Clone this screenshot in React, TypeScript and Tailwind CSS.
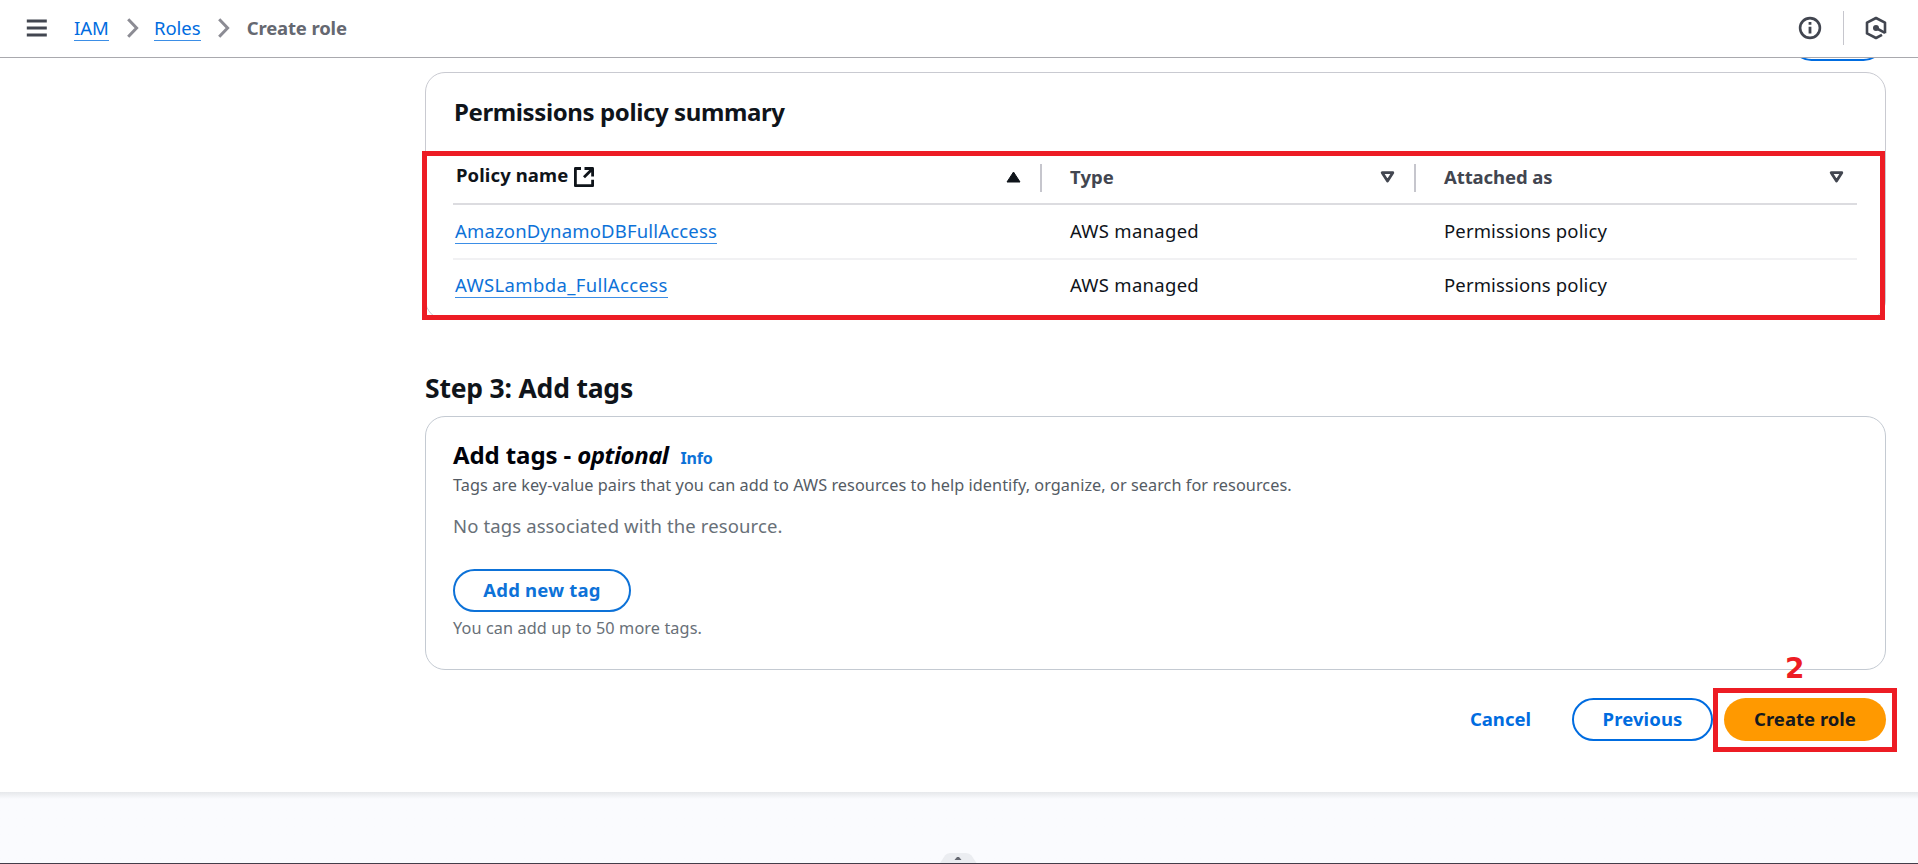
import type { ReactNode } from "react";

function MenuIcon() {
  return (
    <svg width="22" height="20" viewBox="0 0 22 20" fill="none" stroke="#424650" strokeWidth="3">
      <path d="M.8 3h20M.8 10h20M.8 17h20" />
    </svg>
  );
}

function ChevronIcon() {
  return (
    <svg width="12" height="20" viewBox="0 0 12 20" fill="none" stroke="#8c8c94" strokeWidth="3">
      <path d="M1.2 1.2 9.6 10 1.2 18.8" />
    </svg>
  );
}

function InfoIcon() {
  return (
    <svg width="24" height="24" viewBox="0 0 24 24" fill="none" stroke="#424650" strokeWidth="2.6">
      <circle cx="12" cy="12" r="9.9" />
      <path d="M12 10.8v6.8M12 6v2.8" strokeWidth="2.8" />
    </svg>
  );
}

function HexagonIcon() {
  return (
    <svg width="22" height="24" viewBox="0 0 22 24" fill="none" stroke="#424650" strokeWidth="2.6" strokeLinejoin="round">
      <path d="M20 17.2V6.6L11 2 2 6.6v10.8L11 22l6-3.2" />
      <path d="M11 12l9 4.8" />
      <circle cx="11" cy="12" r="3" fill="#424650" stroke="none" />
    </svg>
  );
}

function ExternalIcon() {
  return (
    <svg width="20" height="20" viewBox="0 0 20 20" fill="none" stroke="#0f141a" strokeWidth="2.8" strokeLinejoin="round">
      <path d="M7 1.5H1.4v17.200h17.200v-6M10.500 1.500h8.100v8M18.300 1.900 10 10.200" />
    </svg>
  );
}

function SortIcon({ active = false }: { active?: boolean }) {
  return active ? (
    <svg className="-mt-[2px]" width="15" height="12" viewBox="0 0 15 12" fill="#0f141a" stroke="#0f141a" strokeWidth="1" strokeLinejoin="round">
      <path d="M7.5 1 14 11H1Z" />
    </svg>
  ) : (
    <svg className="-mt-[2px]" width="15" height="12" viewBox="0 0 15 12" fill="none" stroke="#424650" strokeWidth="2.8" strokeLinejoin="round">
      <path d="M2.200 1.700h10.600L7.500 10Z" />
    </svg>
  );
}

function Link({ children, className = "" }: { children: ReactNode; className?: string }) {
  return (
    <a className={`border-b leading-6 text-[18.5px] border-[#3b8ee6] ${className}`}>{children}</a>
  );
}

const policies = [
  { name: "AmazonDynamoDBFullAccess", type: "AWS managed", attached: "Permissions policy", tracking: "tracking-[0.17px] text-[#0d72d8]" },
  { name: "AWSLambda_FullAccess", type: "AWS managed", attached: "Permissions policy", tracking: "tracking-[0.36px] text-[#0d72d8]" },
];

const columns = "grid grid-cols-[589px_374px_441px]";

export default function App() {
  return (
    <div className="relative flex h-[864px] w-[1918px] flex-col overflow-hidden bg-white font-['Noto_Sans','Open_Sans',sans-serif] text-[18.5px] leading-6 text-[#0f141a]">
      <header className="flex h-[58px] shrink-0 items-center border-b border-[#a9a9ae] pr-[31px] pb-px pl-[26px]">
        <MenuIcon />
        <nav className="ml-[26px] flex items-center">
          <Link className="text-[#006ce0]">IAM</Link>
          <span className="mr-[15px] ml-[18px]"><ChevronIcon /></span>
          <Link className="text-[#006ce0]">Roles</Link>
          <span className="mr-[17px] ml-[17px]"><ChevronIcon /></span>
          <span className="border-b border-transparent font-bold tracking-[-0.15px] text-[#656871]">Create role</span>
        </nav>
        <div className="ml-auto flex items-center">
          <InfoIcon />
          <span className="mr-[21px] ml-[21px] h-[34px] w-px bg-[#c6c6cd]" />
          <HexagonIcon />
        </div>
      </header>

      <main className="h-[734px] shrink-0 overflow-hidden pr-8 pl-[425px]">
        <div className="-mt-10 flex justify-end pr-px">
          <div className="h-[43px] w-[95px] rounded-full border-2 border-[#006ce0]" />
        </div>

        <section className="relative mt-[11px] h-[248px] rounded-[20px] border border-[#c9cad1] px-[27px]">
          <h2 className="h-[79px] pt-6 pl-px text-[24px] leading-[30px] font-bold tracking-[-0.39px]">
            Permissions policy summary
          </h2>
          <div className={`${columns} h-[53px] w-[1404px] items-center border-b-2 border-[#dcdce0] font-bold`}>
            <div className="flex h-7 items-center justify-between border-r-2 border-[#c6c6cd] pr-[19px] pl-[3px]">
              <span className="flex items-center gap-[6px] pb-[5px] tracking-[0.1px]">
                Policy name <span className="pt-[4px]"><ExternalIcon /></span>
              </span>
              <SortIcon active />
            </div>
            <div className="flex h-7 items-center justify-between border-r-2 border-[#c6c6cd] pr-[19px] pl-7 text-[#424650]">
              <span className="pb-[2px] tracking-[0.1px]">Type</span>
              <SortIcon />
            </div>
            <div className="flex items-center justify-between pr-[13px] pl-7 text-[#424650]">
              <span className="pb-[2px] tracking-[-0.08px]">Attached as</span>
              <SortIcon />
            </div>
          </div>
          {policies.map((p, i) => (
            <div key={p.name} className={`${columns} w-[1404px] items-center ${i === 0 ? "h-[55px] border-b-2 border-[#f1f1f3]" : "h-[51px]"}`}>
              <div className="flex pl-[2px]"><Link className={p.tracking}>{p.name}</Link></div>
              <span className="pb-px pl-7 tracking-[0.28px]">{p.type}</span>
              <span className="pb-px pl-7 tracking-[0.14px]">{p.attached}</span>
            </div>
          ))}
          <div className="pointer-events-none absolute -top-px -left-px mt-[79px] -ml-[3px] h-[169px] w-[1463px] border-[5px] border-[#ed1c24]" />
        </section>

        <h1 className="mt-[52px] text-[26.5px] leading-8 font-bold tracking-[-0.2px]">Step 3: Add tags</h1>

        <section className="mt-3 h-[254px] rounded-[20px] border border-[#c4cad2] px-[27px] pt-[23px]">
          <div className="flex items-baseline text-[24px] leading-[30px] font-bold text-[#00020a]">
            <h2><span className="tracking-[-0.1px]">Add tags - </span><i className="tracking-[-0.5px]">optional</i></h2>
            <a className="ml-3 text-[16px] tracking-[-0.2px] text-[#0d72d8]">Info</a>
          </div>
          <p className="text-[16.25px] tracking-[0.055px] text-[#545b64]">
            Tags are key-value pairs that you can add to AWS resources to help identify, organize, or search for resources.
          </p>
          <p className="mt-[17px] tracking-[0.12px] text-[#687078]">No tags associated with the resource.</p>
          <button className="mt-[31px] flex h-[43px] w-[178px] items-center justify-center rounded-full border-2 border-[#0d72d8] pb-[2px] font-bold tracking-[0.2px] text-[#0d72d8]">
            Add new tag
          </button>
          <p className="mt-1 text-[16.25px] tracking-[0.1px] text-[#687078]">You can add up to 50 more tags.</p>
        </section>

        <div className="mt-7 flex items-center justify-end font-bold text-[#006ce0]">
          <button className="mr-[41px] pb-[2px]">Cancel</button>
          <button className="mr-[11px] flex h-[43px] w-[141px] items-center justify-center rounded-full border-2 border-[#006ce0] pb-[2px] tracking-[0.1px]">
            Previous
          </button>
          <div className="relative">
            <button className="flex h-[43px] w-[162px] items-center justify-center rounded-full bg-[#ff9900] pb-[2px] text-[#16191f]">
              Create role
            </button>
            <div className="pointer-events-none absolute -top-[10px] -left-[11px] h-[64px] w-[184px] border-[5px] border-[#ed1c24]" />
            <span className="absolute -top-[45px] left-[61px] font-['DejaVu_Sans'] text-[28px] leading-8 font-bold text-[#ed1c24]">2</span>
          </div>
        </div>
      </main>

      <footer className="flex flex-1 items-end border-b border-[#443d4a] bg-[#fafbfe] bg-linear-to-b from-[#e6e8eb] from-0% to-[#fafbfe] to-10% pl-[940px]">
        <svg width="37" height="10" viewBox="0 0 37 10">
          <path d="M0 10 5 2.500Q6.700 0 10 0H26Q29.500 0 31.500 2.500L36.500 10Z" fill="#ebedf1" />
          <path d="M14.500 7 17 4h2l2.500 3Z" fill="#656871" />
        </svg>
      </footer>
    </div>
  );
}
